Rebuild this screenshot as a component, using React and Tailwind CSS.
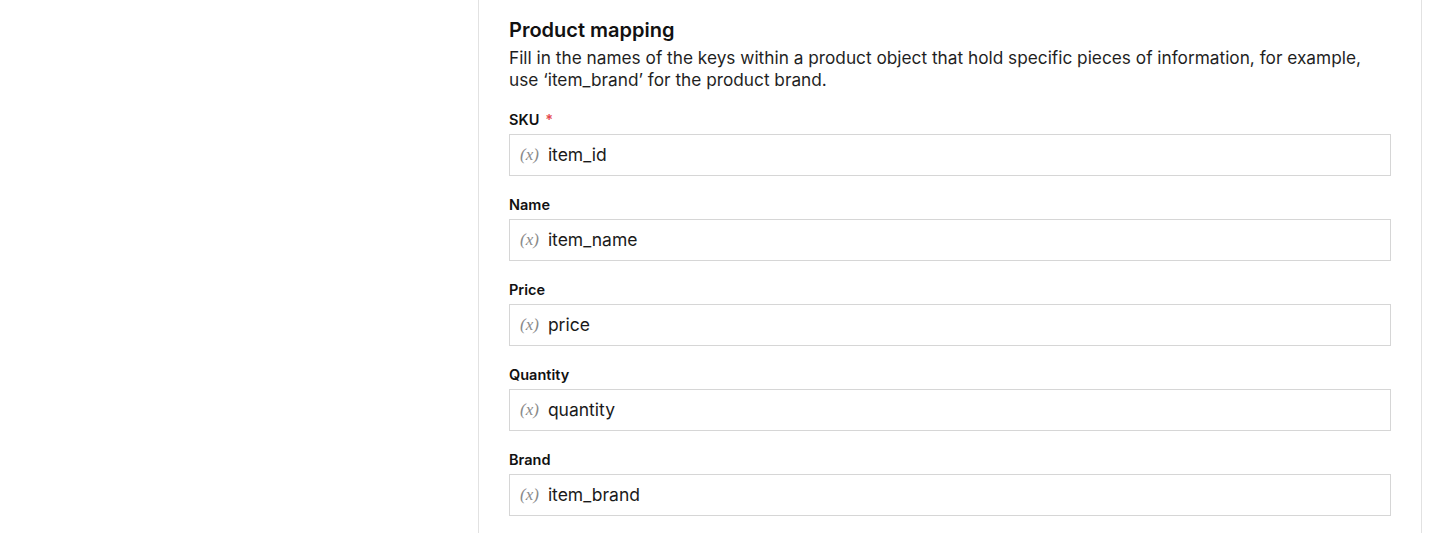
const fields = [
  { label: "SKU", value: "item_id", required: true },
  { label: "Name", value: "item_name" },
  { label: "Price", value: "price" },
  { label: "Quantity", value: "quantity" },
  { label: "Brand", value: "item_brand" },
];

function VariableInput({ value }) {
  return (
    <div className="flex items-center h-[42px] border border-[#d6d6d6] bg-white pl-[10px]">
      <span
        className="text-[17px] italic text-[#8a8a8a] mr-[9px]"
        style={{ fontFamily: '"Liberation Serif", "DejaVu Serif", serif' }}
      >
        (x)
      </span>
      <span className="text-[17.5px] text-[#1a1a1a]">{value}</span>
    </div>
  );
}

export default function App() {
  return (
    <div
      className="w-[1440px] h-[533px] bg-white overflow-hidden"
      style={{ fontFamily: 'Inter, "Noto Sans", sans-serif' }}
    >
      <div className="ml-[478px] w-[944px] h-full border-x border-[#e2e2e2] px-[30px] pt-[16px]">
        <h2 className="text-[20px] leading-[28px] font-semibold text-[#111]">
          Product mapping
        </h2>
        <p className="mt-[3px] text-[17.25px] leading-[22px] text-[#1f1f1f]">
          Fill in the names of the keys within a product object that hold specific pieces of information, for example,
          use ‘item_brand’ for the product brand.
        </p>
        <div className="mt-[19px] flex flex-col gap-[19px]">
          {fields.map((f) => (
            <div key={f.label}>
              <label className="block mb-[4px] text-[14.5px] leading-[20px] font-semibold text-[#111]">
                {f.label}
                {f.required && <span className="ml-[6px] text-[#e5484d]">*</span>}
              </label>
              <VariableInput value={f.value} />
            </div>
          ))}
        </div>
      </div>
    </div>
  );
}
